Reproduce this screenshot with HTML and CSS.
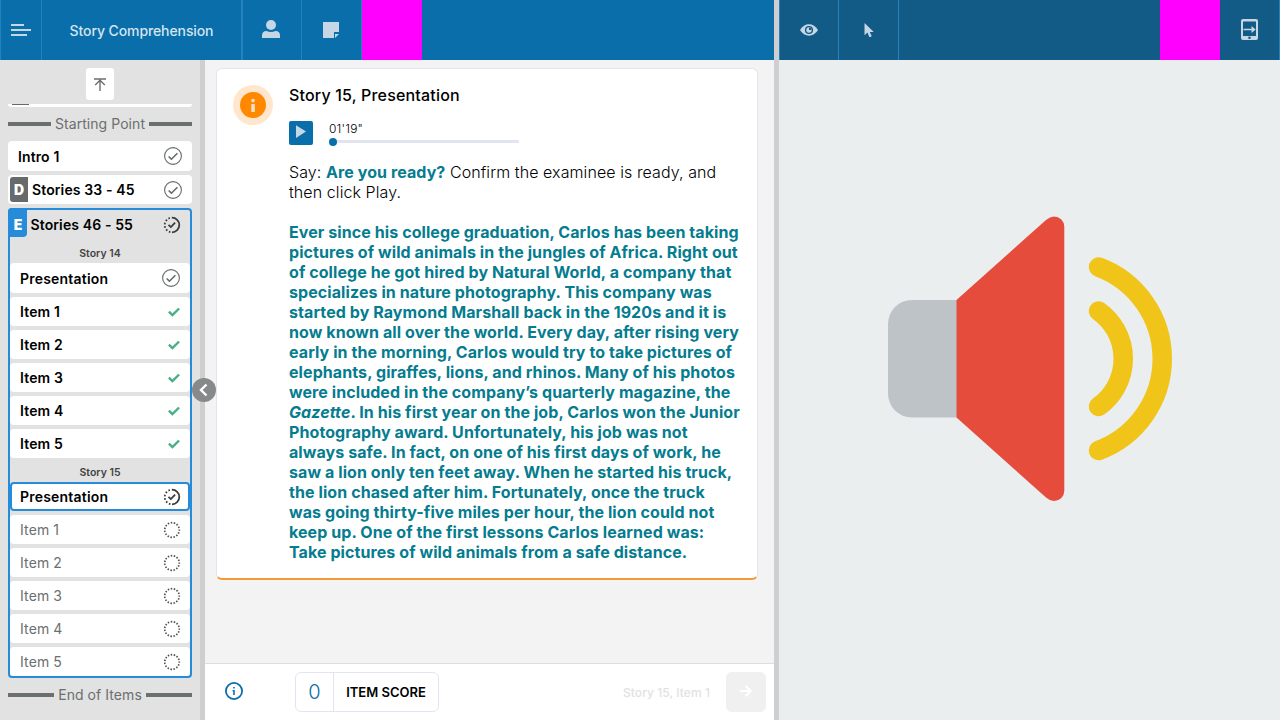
FILE: index.html
```html
<!DOCTYPE html>
<html lang="en">
<head>
<meta charset="utf-8">
<title>Story Comprehension</title>
<link rel="stylesheet" href="styles.css">
</head>
<body>
<svg width="0" height="0" class="defs">
  <symbol id="done" viewBox="0 0 18 18"><circle cx="9" cy="9" r="8.4" fill="none" stroke="#666a6a" stroke-width="1.1"/><path d="M4.6 9.5l2.8 2.7 6-6" fill="none" stroke="#666a6a" stroke-width="1.6"/></symbol>
  <symbol id="progress" viewBox="0 0 18 18"><path d="M9 1.7a7.3 7.3 0 0 1 0 14.6" fill="none" stroke="#3c3c3c" stroke-width="1.8"/><path d="M9 16.3a7.3 7.3 0 0 1 0-14.6" fill="none" stroke="#3c3c3c" stroke-width="1.8" stroke-dasharray="1.6 1.9" stroke-dashoffset="-1.6"/><path d="M5.500 8.8l2.4 2.3 4.2-4.4" fill="none" stroke="#3c3c3c" stroke-width="1.8"/></symbol>
  <symbol id="todo" viewBox="0 0 18 18"><circle cx="9" cy="9" r="7.3" fill="none" stroke="#505050" stroke-width="1.7" stroke-dasharray="1.500 1.558" stroke-dashoffset=".75"/></symbol>
  <symbol id="tick" viewBox="0 0 12 10"><path d="M.9 4.7l3.5 3.4 6.7-6.6" fill="none" stroke="#44b083" stroke-width="2.4"/></symbol>
</svg>
<div class="app">
  <section class="examiner">
    <header class="bar">
      <div class="cell menu"><svg width="20" height="12" viewBox="0 0 20 12" fill="#c5d6e5"><path d="M0 0h13v2H0zM0 5h20v2H0zM0 10h16v2H0z"/></svg></div>
      <div class="cell title">Story Comprehension</div>
      <div class="cell user"><svg width="18" height="18" viewBox="0 0 18 18" fill="#c5d6e5"><circle cx="9" cy="5" r="5"/><path d="M0 18v-2.500Q0 11 4.500 11Q9 13 13.500 11Q18 11 18 15.500V18z"/></svg></div>
      <div class="cell note"><svg width="16" height="16" viewBox="0 0 16 16" fill="#c5d6e5"><path d="M0 0h16v10h-5v6H0z"/><path d="M12 16v-4h4z"/></svg></div>
      <div class="mask"></div>
    </header>
    <div class="work">
      <nav class="side">
        <button class="totop"><svg width="12" height="13" viewBox="0 0 12 13" fill="none" stroke="#6b6f6f" stroke-width="1.4"><path d="M0 1h12M6 13V2.500M1.200 7L6 2.300 10.800 7"/></svg></button>
        <div class="clipped"></div>
        <div class="rule start"><span>Starting Point</span></div>
        <div class="row intro"><span>Intro 1</span><svg class="ic"><use href="#done"/></svg></div>
        <div class="row set"><b class="badge">D</b><span>Stories 33 - 45</span><svg class="ic"><use href="#done"/></svg></div>
        <div class="group">
          <div class="grouphead"><b class="badge">E</b><span>Stories 46 - 55</span><svg class="ic"><use href="#progress"/></svg></div>
          <div class="label">Story 14</div>
          <div class="row pres"><span>Presentation</span><svg class="ic"><use href="#done"/></svg></div>
          <div class="row"><span>Item 1</span><svg class="tick"><use href="#tick"/></svg></div>
          <div class="row"><span>Item 2</span><svg class="tick"><use href="#tick"/></svg></div>
          <div class="row"><span>Item 3</span><svg class="tick"><use href="#tick"/></svg></div>
          <div class="row"><span>Item 4</span><svg class="tick"><use href="#tick"/></svg></div>
          <div class="row"><span>Item 5</span><svg class="tick"><use href="#tick"/></svg></div>
          <div class="label second">Story 15</div>
          <div class="row current"><span>Presentation</span><svg class="ic"><use href="#progress"/></svg></div>
          <div class="row todo"><span>Item 1</span><svg class="ic"><use href="#todo"/></svg></div>
          <div class="row todo"><span>Item 2</span><svg class="ic"><use href="#todo"/></svg></div>
          <div class="row todo"><span>Item 3</span><svg class="ic"><use href="#todo"/></svg></div>
          <div class="row todo"><span>Item 4</span><svg class="ic"><use href="#todo"/></svg></div>
          <div class="row todo"><span>Item 5</span><svg class="ic"><use href="#todo"/></svg></div>
        </div>
        <div class="rule end"><span>End of Items</span></div>
      </nav>
      <div class="splitter"><button class="collapse"><svg width="24" height="24" viewBox="0 0 24 24" fill="none" stroke="#fff" stroke-width="2.4"><path d="M14.500 6.500L9 12l5.500 5.500"/></svg></button></div>
      <main class="main">
        <div class="content">
          <article class="card">
            <div class="info"><svg width="26" height="26" viewBox="0 0 26 26"><circle cx="13" cy="13" r="13" fill="#ff8800"/><circle cx="13" cy="8.600" r="1.800" fill="#ffe3c3"/><path d="M11.300 12h3.500v8h-3.500z" fill="#ffe3c3"/></svg></div>
            <div class="body">
              <h1>Story 15, Presentation</h1>
              <div class="player">
                <button class="play"><svg width="24" height="24" viewBox="0 0 24 24"><path d="M7 4.300l10 6.200-10 6.500z" fill="#c5d6e5"/></svg></button>
                <div class="track"><span>01'19"</span><div class="line"><i></i></div></div>
              </div>
              <p class="say">Say: <b>Are you ready?</b> Confirm the examinee is ready, and<br>then click Play.</p>
              <p class="story">Ever since his college graduation, Carlos has been taking<br>pictures of wild animals in the jungles of Africa. Right out<br>of college he got hired by Natural World, a company that<br>specializes in nature photography. This company was<br>started by Raymond Marshall back in the 1920s and it is<br>now known all over the world. Every day, after rising very<br>early in the morning, Carlos would try to take pictures of<br>elephants, giraffes, lions, and rhinos. Many of his photos<br>were included in the company’s quarterly magazine, the<br><em>Gazette</em>. In his first year on the job, Carlos won the Junior<br>Photography award. Unfortunately, his job was not<br>always safe. In fact, on one of his first days of work, he<br>saw a lion only ten feet away. When he started his truck,<br>the lion chased after him. Fortunately, once the truck<br>was going thirty-five miles per hour, the lion could not<br>keep up. One of the first lessons Carlos learned was:<br>Take pictures of wild animals from a safe distance.</p>
            </div>
          </article>
        </div>
        <footer class="foot">
          <svg class="help" width="18" height="18" viewBox="0 0 18 18"><circle cx="9" cy="9" r="8.100" fill="none" stroke="#0a6eab" stroke-width="1.800"/><path d="M8.200 5h1.600v1.500H8.200zM7.500 8h2.300v5H8.200V9.200h-.7z" fill="#0a6eab"/></svg>
          <div class="score"><span class="num">0</span><span class="cap">ITEM SCORE</span></div>
          <span class="next">Story 15, Item 1</span>
          <button class="go"><svg width="12" height="12" viewBox="0 0 12 12" fill="none" stroke="#fff" stroke-width="2"><path d="M0 6h11M5.500 .8L10.800 6l-5.300 5.200"/></svg></button>
        </footer>
      </main>
    </div>
  </section>
  <div class="divider"></div>
  <section class="examinee">
    <header class="bar dark">
      <div class="cell eye"><svg width="18" height="12" viewBox="0 0 18 12"><path d="M0 6Q3.500 .3 9 .3T18 6Q14.500 11.700 9 11.700T0 6z" fill="#c5d6e5"/><circle cx="9" cy="6" r="3.400" fill="none" stroke="#135b87" stroke-width="1.400"/><path d="M9 3.500V6h2.500A2.500 2.500 0 0 0 9 3.500z" fill="#135b87"/></svg></div>
      <div class="cell pointer"><svg width="10" height="15" viewBox="0 0 10 15" fill="#c5d6e5"><path d="M.5 0v12.300L3.500 9.500 5.300 14.200l2.500-.9-2-4.300h4z"/></svg></div>
      <div class="cell grow"></div>
      <div class="mask"></div>
      <div class="cell device"><svg width="17" height="21" viewBox="0 0 17 21"><rect width="17" height="21" rx="2" fill="#c5d6e5"/><path d="M2 2.500h13V17H2z" fill="#135b87"/><path d="M2.500 9.700h8V7l4.200 3.500-4.200 3.500v-2.700h-8z" fill="#c5d6e5"/><circle cx="8.500" cy="18.800" r="1.300" fill="#135b87"/></svg></div>
    </header>
    <div class="stimulus"><svg width="286" height="286" viewBox="888 216 286 286"><path d="M957 300h-45a24 24 0 0 0-24 24v69.500a24 24 0 0 0 24 24h45z" fill="#bdc3c7"/><path d="M956.500 300L1046 220Q1050 216.500 1054 216.500A10.300 10.300 0 0 1 1064.300 227V490.500A10.300 10.300 0 0 1 1054 501Q1050 501 1046 497.500L956.500 417.500z" fill="#e64c3c"/><path d="M1098.500 267A97.900 97.900 0 0 1 1098.500 450.500M1098.500 311A58.400 58.400 0 0 1 1098.500 406.500" fill="none" stroke="#f0c419" stroke-width="19.500" stroke-linecap="round"/></svg></div>
  </section>
</div>
</body>
</html>
```
FILE: styles.css
```css
* { box-sizing: border-box; }
body { margin: 0; font-family: Inter, "Liberation Sans", sans-serif; color: #000; overflow: hidden; }
button { border: 0; padding: 0; font: inherit; display: flex; align-items: center; justify-content: center; }
svg { flex: none; display: block; }
.defs { position: absolute; }
.app { display: flex; width: 1280px; height: 720px; }
.examiner { width: 774px; display: flex; flex-direction: column; }
.divider { width: 5px; background: #cfcfcf; }
.examinee { width: 501px; background: #eaeeef; display: flex; flex-direction: column; }
.bar { height: 60px; flex: none; display: flex; background: #0a6eab; border-left: 1px solid #2482bd; }
.cell { display: flex; align-items: center; justify-content: center; border-right: 1px solid #2482bd; }
.menu { width: 41px; }
.title { width: 201px; border-right-width: 2px; font-size: 14px; font-weight: 500; letter-spacing: -.1px; color: #d3e5f1; }
.user { width: 59px; padding: 0 2px 2px 0; }
.note { width: 60px; padding-right: 2px; }
.mask { width: 60px; background: #f0f; }
.bar.dark { background: #135b87; }
.eye { width: 59px; padding-bottom: 1px; }
.pointer { width: 60px; }
.grow { flex: 1; border: 0; }
.device { width: 60px; padding-bottom: 1px; }

.work { flex: 1; display: flex; min-height: 0; }
.side { width: 200px; padding: 8px 8px 0; background: #e2e2e2; }
.totop { width: 28px; height: 32px; margin: 0 auto; background: #fff; border-radius: 3px; }
.clipped { height: 3px; margin-top: 4px; background: #fff; border-radius: 0 0 4px 4px; display: flex; }
.clipped::before { content: ""; width: 17px; height: 1px; margin-left: 4px; background: #666a6a; }
.rule { display: flex; align-items: center; gap: 4px; font-size: 14px; line-height: 18px; letter-spacing: .06px; color: #6b6f6f; white-space: nowrap; }
.rule::before, .rule::after { content: ""; flex: 1; height: 4px; background: #6b6f6f; }
.start { margin-top: 8px; }
.end { margin-top: 8px; }
.row { height: 29px; margin-bottom: 4px; padding: 0 9px 0 10px; display: flex; align-items: center; background: #fff; border-radius: 4px; font-size: 14px; font-weight: 600; letter-spacing: .12px; }
.intro span, .pres span { padding-top: 1px; }
.row span, .grouphead span { flex: 1; }
.row:not(.intro):not(.pres) span { padding-bottom: 1px; }
.intro { height: 30px; margin-top: 8px; padding-right: 10px; }
.set { padding-left: 2px; padding-right: 10px; }
.badge { width: 18px; height: 25px; background: #666a6a; color: #fff; display: flex; align-items: center; justify-content: center; border-radius: 3px 0 0 3px; margin-right: 4px; }
.ic { width: 18px; height: 18px; }
.tick { width: 12px; height: 10px; margin-right: 1px; }
.group { height: 470px; border: 2px solid #268bd9; border-radius: 4px; }
.grouphead { height: 33px; margin: -2px 0 0 -2px; padding-right: 9px; display: flex; align-items: center; font-size: 14px; font-weight: 600; letter-spacing: .12px; }
.grouphead .badge { width: 19px; height: 29px; background: #268bd9; border-radius: 4px 0 4px 0; align-self: flex-start; padding: 4px 0 0 1px; margin-right: 3.500px; }
.label { height: 22px; padding-top: 6px; font-size: 10.5px; line-height: 13px; font-weight: 600; color: #444; text-align: center; }
.label.second { height: 20px; padding-top: 4px; }
.pres { height: 30px; padding-right: 10px; letter-spacing: .2px; }
.current { border: 2px solid #268bd9; padding: 0 7px 0 8px; letter-spacing: .2px; }
.todo { font-weight: 400; color: #6b6f6f; }

.splitter { width: 5px; background: #cfcfcf; position: relative; }
.collapse { position: absolute; z-index: 1; left: -8px; top: 318px; width: 24px; height: 24px; border-radius: 50%; background: #868a8a; }
.main { flex: 1; display: flex; flex-direction: column; background: #f3f3f3; }
.content { flex: 1; padding: 8px 16px 0 11px; }
.card { height: 512px; display: flex; background: #fff; border: 1px solid #e2e5f1; border-bottom: 2px solid #f79831; border-radius: 6px; }
.info { width: 40px; height: 40px; margin: 16px 16px 0; display: flex; align-items: center; justify-content: center; border-radius: 50%; background: #ffe6cc; }
.body { flex: 1; font-size: 16px; line-height: 20px; letter-spacing: .083px; white-space: nowrap; }
h1 { margin: 16px 0 0; font-size: 16px; font-weight: 500; line-height: 21px; letter-spacing: .18px; }
.player { display: flex; margin-top: 15px; gap: 16px; }
.play { width: 24px; height: 24px; background: #0a6eab; border-radius: 2px; }
.track { width: 190px; font-size: 12px; line-height: 16px; font-weight: 300; }
.track span { display: block; letter-spacing: .2px; }
.line { height: 3px; margin-top: 3px; background: #e2e5f1; border-radius: 2px; display: flex; align-items: center; }
.line i { width: 8px; height: 8px; flex: none; border-radius: 50%; background: #0a6eab; }
p { margin: 0; }
.say { margin-top: 17px; font-weight: 300; }
.say b, .story { font-weight: 700; color: #057c8f; }
.story { margin-top: 20px; }

.foot { height: 57px; padding: 0 8px 0 20px; display: flex; align-items: center; background: #fff; border-top: 1px solid #ddd; }
.help { margin-bottom: 2px; }
.score { width: 144px; height: 40px; margin-left: 52px; display: flex; border: 1px solid #e2e5f1; border-radius: 6px; }
.num { width: 38px; border-right: 1px solid #e2e5f1; display: flex; align-items: center; justify-content: center; font-size: 20px; font-weight: 300; color: #0a6eab; }
.cap { flex: 1; display: flex; align-items: center; justify-content: center; font-size: 13px; font-weight: 600; }
.next { margin-left: auto; font-size: 12px; font-weight: 500; letter-spacing: .06px; color: #e2e2e2; }
.go { width: 40px; height: 40px; margin-left: 16px; border-radius: 6px; background: #f0f0f0; padding-bottom: 2px; }
.stimulus { flex: 1; padding: 156px 0 0 109px; }
```
